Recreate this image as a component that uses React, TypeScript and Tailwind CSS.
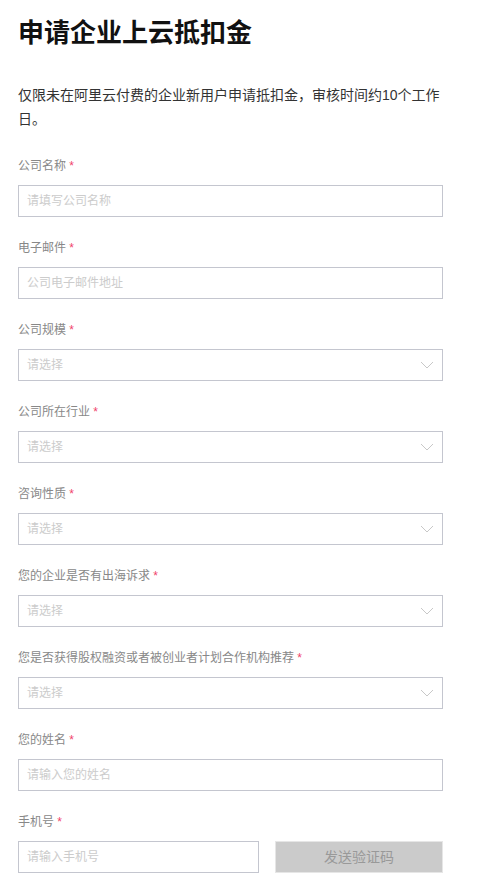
import React from 'react';

const font = { fontFamily: '"Liberation Sans", "Noto Sans CJK SC", sans-serif' };

function Label({ text }: { text: string }) {
  return (
    <div className="h-[18px] text-[12px] leading-[18px] text-[#888]">
      {text} <span className="text-[#f0436b]">*</span>
    </div>
  );
}

function TextField({ label, placeholder }: { label: string; placeholder: string }) {
  return (
    <div className="mb-[22px]">
      <Label text={label} />
      <input
        placeholder={placeholder}
        className="mt-[10px] block h-[32px] w-full border border-[#c4c6cf] bg-white px-[8px] text-[12px] outline-none placeholder:text-[#ccc]"
      />
    </div>
  );
}

function SelectField({ label }: { label: string }) {
  return (
    <div className="mb-[22px]">
      <Label text={label} />
      <div className="mt-[10px] flex h-[32px] w-full items-center justify-between border border-[#c4c6cf] bg-white pl-[8px] pr-[8px]">
        <span className="text-[12px] text-[#ccc]">请选择</span>
        <svg width="14" height="8" viewBox="0 0 14 8" fill="none">
          <path d="M1 1l6 6 6-6" stroke="#c8c8c8" strokeWidth="1" />
        </svg>
      </div>
    </div>
  );
}

export default function App() {
  return (
    <div className="min-h-[888px] w-[483px] bg-white pl-[18px] pr-[40px] pt-[15px]" style={font}>
      <h1 className="text-[26px] font-bold leading-[36px] text-[#111]">申请企业上云抵扣金</h1>
      <p className="mt-[32px] text-[14px] leading-[24px] text-[#333]">
        仅限未在阿里云付费的企业新用户申请抵扣金，审核时间约10个工作日。
      </p>
      <div className="mt-[26px]">
        <TextField label="公司名称" placeholder="请填写公司名称" />
        <TextField label="电子邮件" placeholder="公司电子邮件地址" />
        <SelectField label="公司规模" />
        <SelectField label="公司所在行业" />
        <SelectField label="咨询性质" />
        <SelectField label="您的企业是否有出海诉求" />
        <SelectField label="您是否获得股权融资或者被创业者计划合作机构推荐" />
        <TextField label="您的姓名" placeholder="请输入您的姓名" />
        <div>
          <Label text="手机号" />
          <div className="mt-[10px] flex gap-[16px]">
            <input
              placeholder="请输入手机号"
              className="block h-[32px] w-[241px] border border-[#c4c6cf] bg-white px-[8px] text-[12px] outline-none placeholder:text-[#ccc]"
            />
            <button className="h-[32px] flex-1 border border-[#e6e6e6] bg-[#cbcbcb] text-[14px] text-[#999]">
              发送验证码
            </button>
          </div>
        </div>
      </div>
    </div>
  );
}
